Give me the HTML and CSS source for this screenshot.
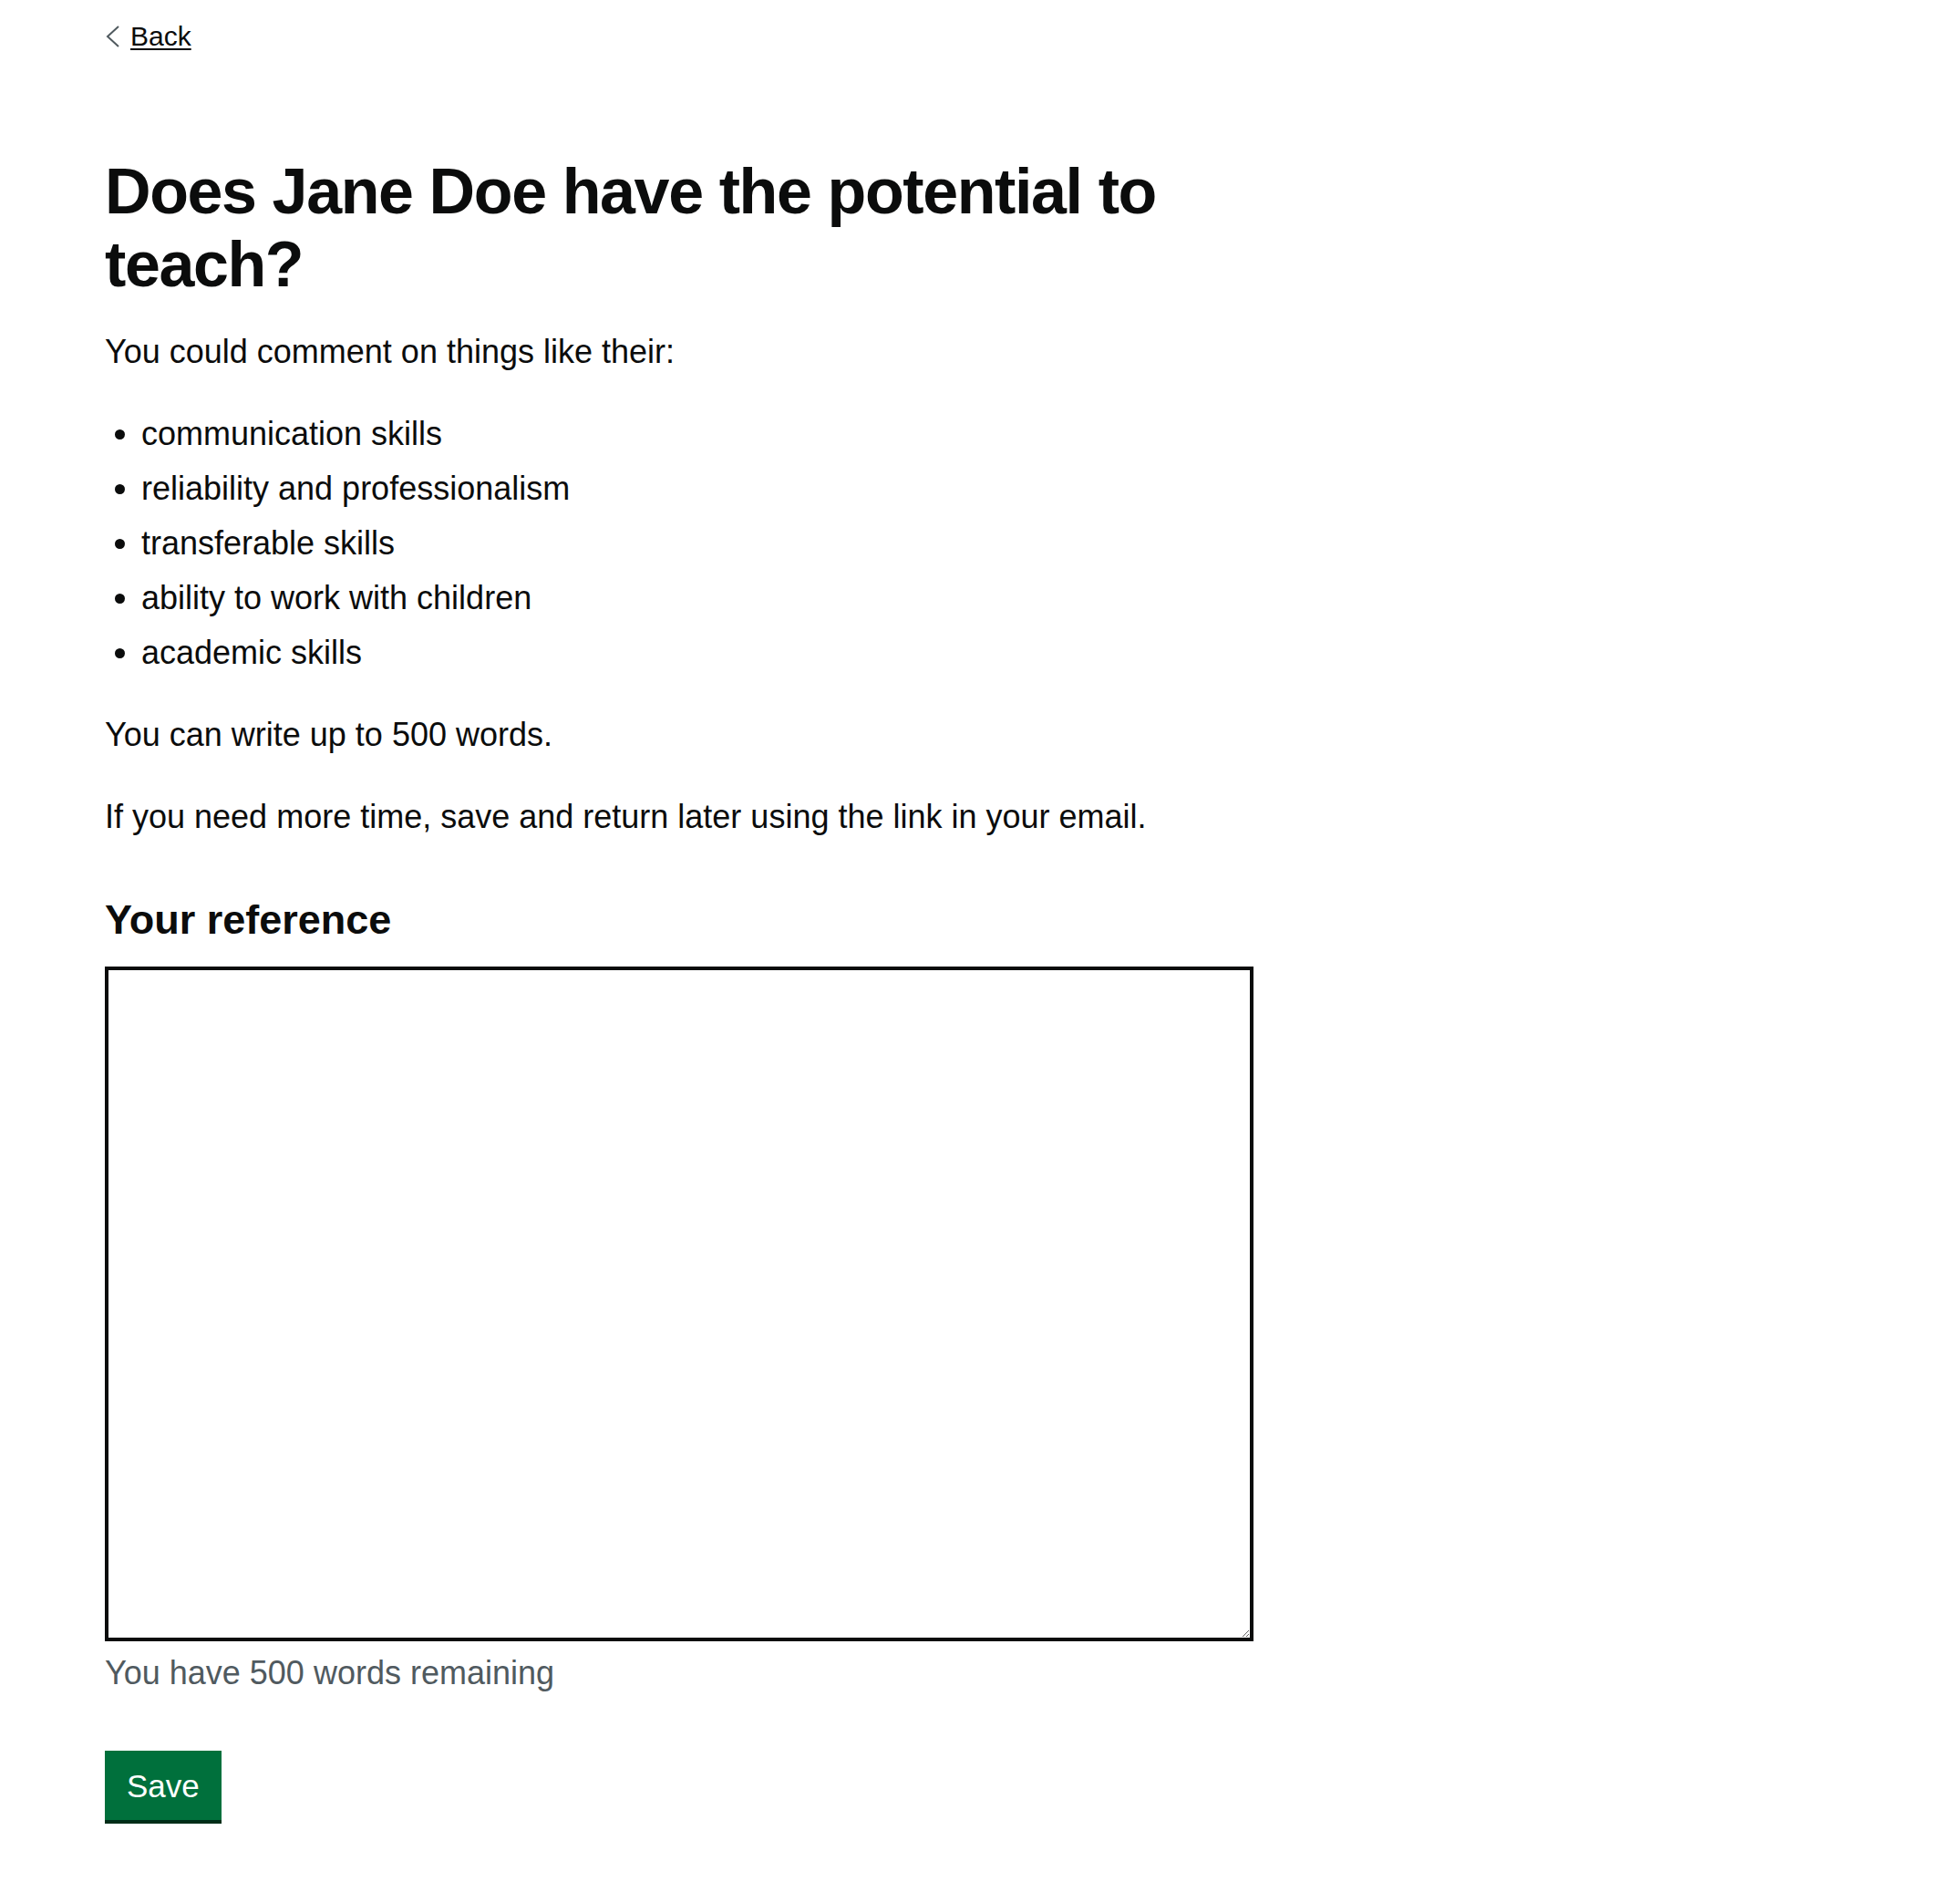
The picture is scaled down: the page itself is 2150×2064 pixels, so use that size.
FILE: index.html
```html
<!DOCTYPE html>
<html lang="en">
<head>
<meta charset="utf-8">
<title>Does Jane Doe have the potential to teach?</title>
<link rel="stylesheet" href="styles.css">
</head>
<body>
<div class="page">
  <a class="back-link" href="#">
    <svg class="back-chevron" width="16" height="24" viewBox="0 0 16 24" aria-hidden="true"><polyline points="14,1 2,12 14,23" fill="none" stroke="#505a5f" stroke-width="2"/></svg>
    <span class="back-text">Back</span>
  </a>
  <main class="main">
    <div class="column">
      <h1 class="heading">Does Jane Doe have the potential to teach?</h1>
      <p class="body">You could comment on things like their:</p>
      <ul class="list">
        <li>communication skills</li>
        <li>reliability and professionalism</li>
        <li>transferable skills</li>
        <li>ability to work with children</li>
        <li>academic skills</li>
      </ul>
      <p class="body">You can write up to 500 words.</p>
      <p class="body">If you need more time, save and return later using the link in your email.</p>
      <div class="form-group">
        <label class="label" for="reference">Your reference</label>
        <textarea class="textarea" id="reference" rows="15"></textarea>
        <div class="hint">You have 500 words remaining</div>
      </div>
      <button class="button" type="submit">Save</button>
    </div>
  </main>
</div>
</body>
</html>
```

FILE: styles.css
```css
html, body {
  margin: 0;
  padding: 0;
  background: #ffffff;
}

body {
  font-family: "Liberation Sans", Arial, sans-serif;
  color: #0b0c0c;
}

.page {
  width: 1920px;
  margin: 0 auto;
}

.back-link {
  display: flex;
  width: fit-content;
  align-items: center;
  margin-top: 24px;
  height: 32px;
  line-height: 32px;
  font-size: 30px;
  color: #0b0c0c;
  text-decoration: none;
}

.back-chevron {
  display: block;
  margin-left: 1px;
  margin-right: 11px;
}

.back-text {
  text-decoration: underline;
  text-decoration-thickness: 2px;
  text-underline-offset: 3px;
}

.main {
  padding-top: 114px;
  padding-bottom: 40px;
}

.column {
  width: 1260px;
}

.heading {
  margin: 0 0 31px;
  font-size: 70px;
  line-height: 80px;
  font-weight: 700;
  letter-spacing: -1.4px;
}

.body {
  margin: 0 0 40px;
  font-size: 36px;
  line-height: 50px;
}

.list {
  margin: 0 0 40px;
  padding-left: 40px;
  font-size: 36px;
  line-height: 50px;
}

.list li {
  margin-bottom: 10px;
}

.list li:last-child {
  margin-bottom: 0;
}

.form-group {
  padding-top: 18px;
  margin-bottom: 60px;
}

.label {
  display: block;
  margin-bottom: 21px;
  font-size: 45px;
  line-height: 60px;
  font-weight: 700;
}

.textarea {
  display: block;
  box-sizing: border-box;
  width: 1260px;
  height: 740px;
  margin: 0 0 10px;
  padding: 10px;
  border: 4px solid #0b0c0c;
  border-radius: 0;
  font-family: inherit;
  font-size: 36px;
  line-height: 1.25;
  color: #0b0c0c;
  resize: vertical;
  background: #ffffff;
}

.hint {
  font-size: 36px;
  line-height: 50px;
  color: #505a5f;
}

.button {
  display: block;
  box-sizing: border-box;
  height: 76px;
  margin: 0;
  padding: 16px 20px 14px;
  border: 4px solid transparent;
  border-radius: 0;
  background: #00703c;
  box-shadow: 0 4px 0 #002d18;
  color: #ffffff;
  font-family: inherit;
  font-size: 35px;
  line-height: 38px;
  cursor: pointer;
}
```
